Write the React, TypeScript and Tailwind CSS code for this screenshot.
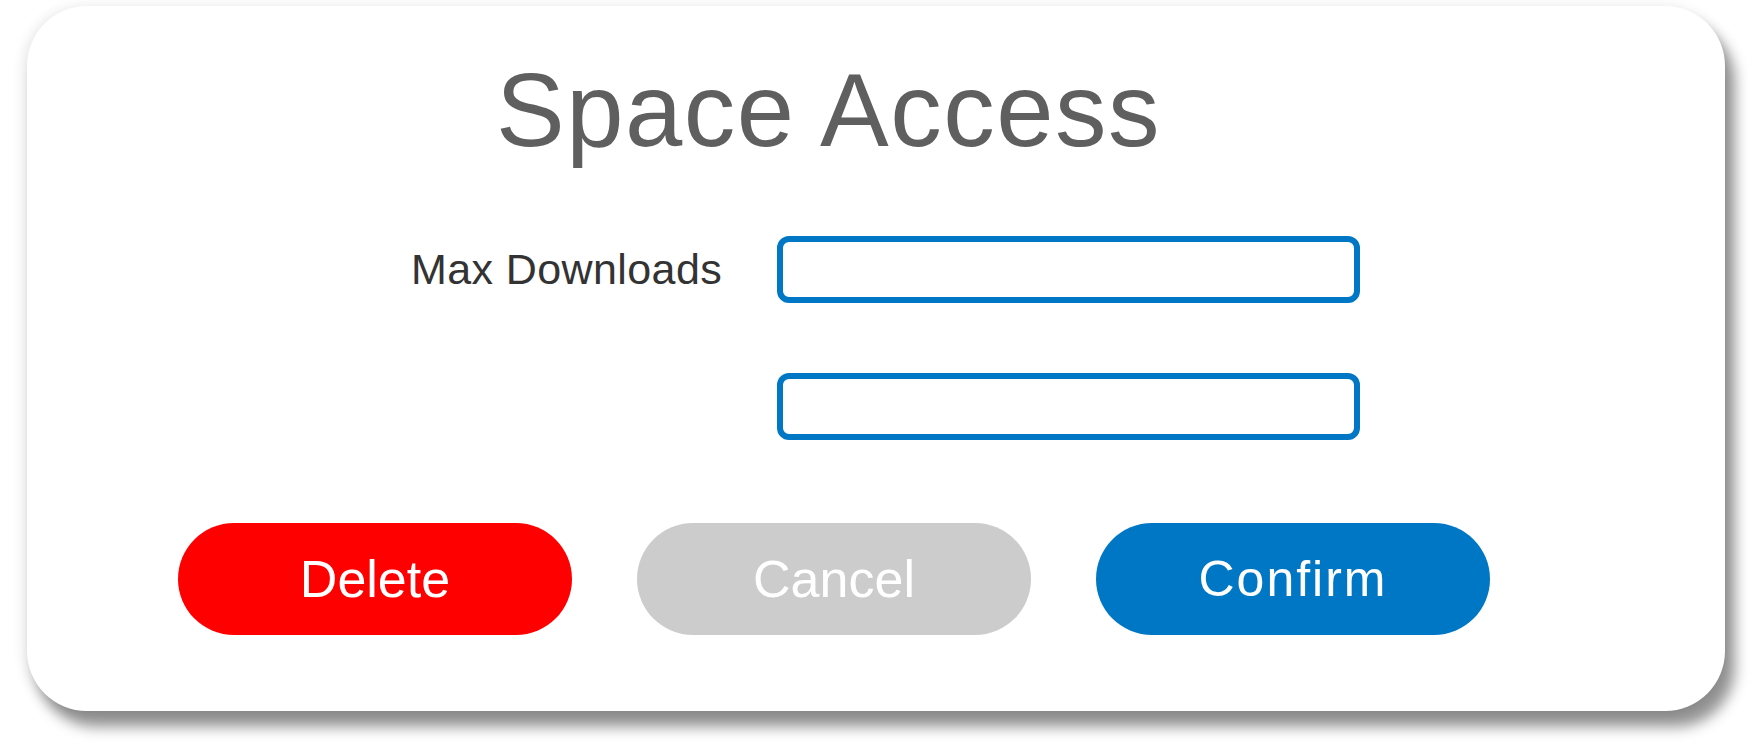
import { useState } from "react";

const font = { fontFamily: '"Liberation Sans", Arial, sans-serif' };

function ActionButton({
  label,
  className,
}: {
  label: string;
  className: string;
}) {
  return (
    <button
      className={`flex h-[112px] w-[394px] items-center justify-center rounded-full leading-none text-white ${className}`}
    >
      {label}
    </button>
  );
}

export default function App() {
  const [maxDownloads, setMaxDownloads] = useState("");
  const [second, setSecond] = useState("");

  return (
    <main className="h-[752px] w-[1752px] overflow-hidden bg-white pl-[27px] pt-[6px]" style={font}>
      <div className="flex h-[705px] w-[1698px] flex-col rounded-[60px] bg-white shadow-[10px_16px_14px_rgba(0,0,0,0.42),-2px_2px_14px_rgba(0,0,0,0.12)]">
        <h1 className="mt-[53px] pl-[469px] text-[103px] font-normal leading-none tracking-[1.5px] text-[#5f5f5f]">
          Space Access
        </h1>

        <div className="mt-[74px] flex items-center pl-[384px]">
          <label className="w-[366px] text-[43px] leading-none tracking-[0.4px] text-[#333333]">
            Max Downloads
          </label>
          <input
            value={maxDownloads}
            onChange={(e) => setMaxDownloads(e.target.value)}
            className="h-[67px] w-[583px] rounded-[12px] border-[6px] border-[#0077c5] bg-white px-3 text-[32px] outline-none"
          />
        </div>

        <div className="mt-[70px] flex pl-[750px]">
          <input
            value={second}
            onChange={(e) => setSecond(e.target.value)}
            className="h-[67px] w-[583px] rounded-[12px] border-[6px] border-[#0077c5] bg-white px-3 text-[32px] outline-none"
          />
        </div>

        <div className="mt-[83px] flex gap-[65px] pl-[151px]">
          <ActionButton label="Delete" className="bg-[#ff0000] text-[52px]" />
          <ActionButton label="Cancel" className="bg-[#cccccc] text-[52px]" />
          <ActionButton label="Confirm" className="bg-[#0077c5] text-[50px] tracking-[2px]" />
        </div>
      </div>
    </main>
  );
}
